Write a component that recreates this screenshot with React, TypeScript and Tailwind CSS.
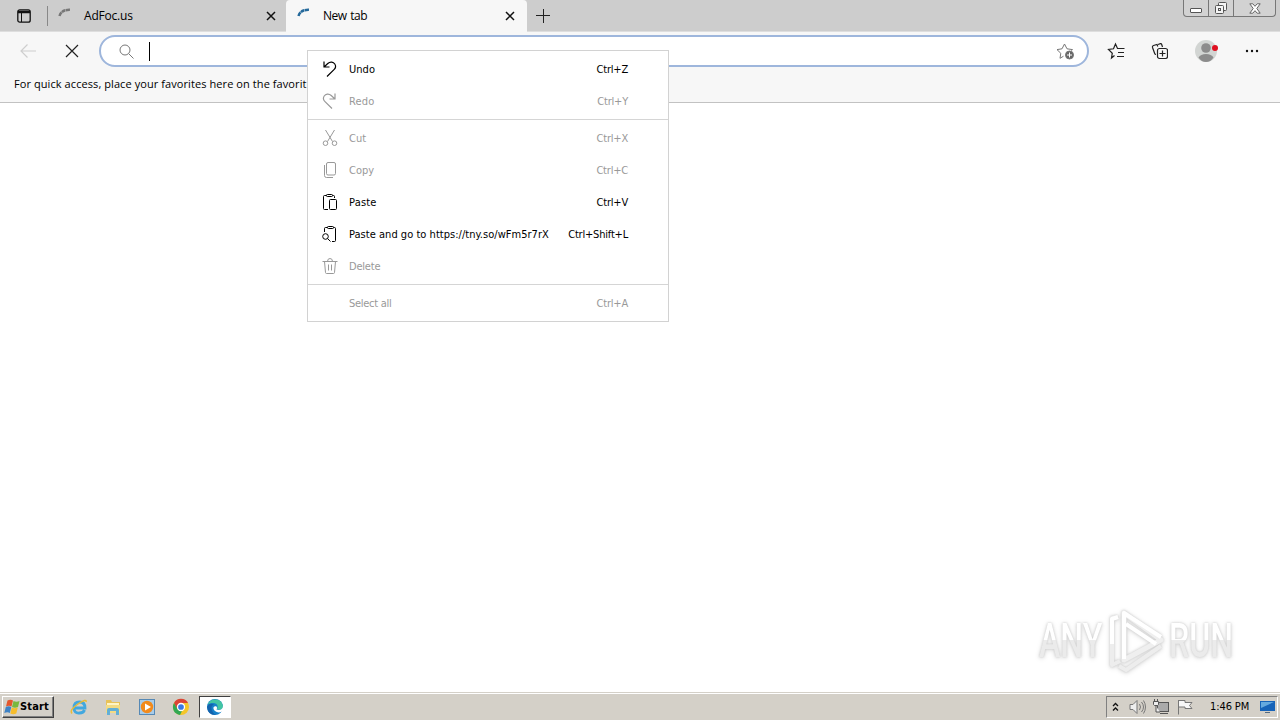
import type { ReactNode } from 'react';

type MenuEntry = { label: string; keys?: string; icon?: ReactNode; disabled?: boolean; tracking?: string };

function Icon({ children, className = 'h-4 w-4' }: { children: ReactNode; className?: string }) {
  return (
    <svg viewBox="0 0 16 16" className={className} fill="none" stroke="currentColor" strokeWidth="1">
      {children}
    </svg>
  );
}

const history: MenuEntry[] = [
  { label: 'Undo', keys: 'Ctrl+Z', icon: <Icon><path d="M2 .5v5.500h5.500M2.300 5.700l3.500-3.200c2.500-2.300 5.600-1.500 7 .5 1.300 2 .9 4-.8 5.700L5 15.500" strokeWidth="1.200" /></Icon> },
  { label: 'Redo', keys: 'Ctrl+Y', disabled: true, tracking: 'tracking-[0.2px]', icon: <Icon><path d="M13 .5v5.500H7.500M12.700 5.700L9.200 2.500C6.700.2 3.600 1 2.200 3c-1.300 2-.9 4 .8 5.700L10 15.500" strokeWidth="1.200" /></Icon> },
];

const editing: MenuEntry[] = [
  { label: 'Cut', keys: 'Ctrl+X', disabled: true, icon: <Icon><path d="M3.500 0l7 11.500M12.500 0l-7 11.500" /><circle cx="3.500" cy="13.200" r="2.300" /><circle cx="12.500" cy="13.200" r="2.300" /></Icon> },
  { label: 'Copy', keys: 'Ctrl+C', disabled: true, icon: <Icon><rect x="4.500" y=".5" width="9" height="12.500" rx="1.500" /><path d="M2.500 3v10.500q0 2 2 2H11" /></Icon> },
  { label: 'Paste', keys: 'Ctrl+V', tracking: 'tracking-[0.2px]', icon: <Icon><path d="M6 15.500H2.500q-1 0-1-1v-12q0-1 1-1h2m6 0h1q1 0 1 1V4" /><rect x="4.500" y=".5" width="6" height="2" rx=".8" /><rect x="7.500" y="5.500" width="7" height="10" rx="1" /></Icon> },
  { label: 'Paste and go to https://tny.so/wFm5r7rX', keys: 'Ctrl+Shift+L', icon: <Icon><path d="M2.500 6V2.500q0-1 1-1h2m6 0h1q1 0 1 1v12q0 1-1 1H10" /><rect x="5.500" y=".5" width="6" height="2" rx=".8" /><circle cx="3.500" cy="10.500" r="2.800" /><path d="M5.500 12.500L8.500 15.500" /></Icon> },
  { label: 'Delete', disabled: true, tracking: 'tracking-[-0.2px]', icon: <Icon><path d="M.5 3.500h15M5.500 3.500Q5.500.5 8 .5t2.500 3M2.500 3.500l1 11q.1 1 1 1h7q.9 0 1-1l1-11M6.500 6.500v6M9.500 6.500v6" /></Icon> },
];

function MenuRow({ label, keys, icon, disabled, tracking = 'tracking-[0.03px]' }: MenuEntry) {
  return (
    <div className={`flex h-8 items-center pl-[14px] pr-[40px] ${disabled ? 'text-[#999]' : 'text-black'}`}>
      <span className="mr-[11px] h-4 w-4">{icon}</span>
      <span className={`pt-[2px] ${tracking}`}>{label}</span>
      <span className="ml-auto pt-[2px] tracking-[-0.2px]">{keys}</span>
    </div>
  );
}

function Separator() {
  return <div className="my-[2px] h-px bg-[#d5d5d5]" />;
}

function ContextMenu() {
  return (
    <div className="absolute left-[307px] top-[50px] h-[272px] w-[362px] whitespace-nowrap border border-[#d2d2d2] bg-white py-[2px] text-[11px] [font-family:'DejaVu_Sans_Condensed','DejaVu_Sans',sans-serif] font-stretch-condensed">
      {history.map((item) => <MenuRow key={item.label} {...item} />)}
      <Separator />
      {editing.map((item) => <MenuRow key={item.label} {...item} />)}
      <Separator />
      <MenuRow label="Select all" keys="Ctrl+A" tracking="tracking-[-0.28px]" disabled />
    </div>
  );
}

function Spinner({ color }: { color: string }) {
  return (
    <svg viewBox="0 0 16 16" className="h-4 w-4" fill="none">
      <path d="M2.500 8Q4.500 1.500 13 1.800" stroke={color} strokeWidth="2.500" strokeDasharray="4 .5" />
    </svg>
  );
}

function Close() {
  return (
    <svg viewBox="0 0 10 10" className="h-[10px] w-[10px]" stroke="#111" strokeWidth="1.500">
      <path d="M1 1l8 8M9 1L1 9" />
    </svg>
  );
}

function WindowControls() {
  return (
    <div className="ml-auto mr-[4px] flex h-[17px] w-[93px] self-start rounded-b-[4px] border border-t-0 border-[#777] bg-[#d2d2d2]">
      <span className="flex w-[25px] items-center justify-center border-r border-[#777] pt-[5px]">
        <span className="h-[5px] w-[12px] rounded-[1px] border border-[#555] bg-white" />
      </span>
      <span className="flex w-[25px] items-center justify-center border-r border-[#777]">
        <svg viewBox="0 0 14 14" className="h-[14px] w-[14px]" fill="#f4f4f4" stroke="#555">
          <rect x="4.500" y="1.500" width="8" height="8" rx="1" />
          <rect x="1.500" y="4.500" width="8" height="8" rx="1" />
          <rect x="4.500" y="7.500" width="2" height="2" />
        </svg>
      </span>
      <span className="flex grow items-center justify-center">
        <svg viewBox="0 0 12 11" className="h-[11px] w-[12px]" fill="#fff" stroke="#666">
          <path d="M.8.8h3L6 3.300 8.200.8h3L7.800 5.500l3.400 4.700h-3L6 7.700l-2.200 2.500h-3l3.400-4.700z" />
        </svg>
      </span>
    </div>
  );
}

function TabStrip() {
  return (
    <div className="flex h-8 items-center border-b border-[#dedede] bg-[#cdcdcd] text-[12px] text-black">
      <svg viewBox="0 0 14 14" className="ml-[17px] h-[14px] w-[14px]" fill="none" stroke="#111">
        <rect x=".8" y=".8" width="12.400" height="12.400" rx="2" strokeWidth="1.300" />
        <path d="M1 3h12" strokeWidth="2.500" />
        <path d="M4.500 4v9" />
      </svg>
      <div className="ml-[16px] h-5 w-px bg-[#888]" />
      <div className="flex h-full w-[238px] items-center pl-[9px] pr-[10px]">
        <Spinner color="#777" />
        <span className="ml-[11px] tracking-[-0.2px]">AdFoc.us</span>
        <span className="ml-auto"><Close /></span>
      </div>
      <div className="z-10 mt-px flex h-8 w-[241px] shrink-0 items-center rounded-t-[4px] bg-[#f7f7f7] pl-[10px] pr-[12px]">
        <Spinner color="#24699b" />
        <span className="ml-[11px] tracking-[-0.5px] [word-spacing:1px]">New tab</span>
        <span className="ml-auto"><Close /></span>
      </div>
      <svg viewBox="0 0 14 14" className="ml-[9px] h-[14px] w-[14px]" stroke="#222">
        <path d="M7.500 0v14M0 6.500h14" />
      </svg>
      <WindowControls />
    </div>
  );
}

function Toolbar() {
  return (
    <div className="flex h-[38px] items-center">
      <svg viewBox="0 0 16 14" className="ml-[20px] h-[14px] w-[16px]" fill="none" stroke="#cecece">
        <path d="M16 7H1M7.500.5L1 7l6.500 6.500" strokeWidth="1.200" />
      </svg>
      <svg viewBox="0 0 14 14" className="ml-[29px] h-[14px] w-[14px]" stroke="#222">
        <path d="M1 1l12 12M13 1L1 13" strokeWidth="1.200" />
      </svg>
      <div className="ml-[20px] flex h-8 w-[990px] items-center rounded-full border-2 border-[#9eb6dc] bg-white pl-[18px] pr-[13px]">
        <svg viewBox="0 0 15 15" className="h-[15px] w-[15px]" fill="none" stroke="#777">
          <circle cx="6" cy="6" r="5" />
          <path d="M9.700 9.700l4.800 4.800" />
        </svg>
        <span className="ml-[15px] h-[19px] w-px bg-black" />
        <svg viewBox="0 0 18 18" className="ml-auto h-[18px] w-[18px]" fill="none" stroke="#777">
          <path d="M7.500 14.200L4 16.300l.8-5-3.800-3.700 5-.8L8.500 2l2.500 4.800 5.500.8-1.200 1" />
          <circle cx="13.500" cy="13" r="4" fill="#666" />
          <path d="M13.500 10.500v5M11 13h5" stroke="#fff" />
        </svg>
      </div>
      <svg viewBox="0 0 18 18" className="ml-[18px] h-[18px] w-[18px]" fill="none" stroke="#222" strokeWidth="1.200">
        <path d="M7.500 13.500L4.500 16l.8-4.800L1.500 7.500l5-.7L8.500 2l2 4.500h7M11 10.500h6M10 14.500h7" />
      </svg>
      <svg viewBox="0 0 18 18" className="ml-[25px] h-[18px] w-[18px]" fill="none" stroke="#222" strokeWidth="1.200">
        <path d="M12.500 5l-.8-2.500q-.3-1-1.300-.8L8 2.500M6 12.500Q5 12.500 4.700 11.500L2.500 5.500Q2 4 3.500 3.500L7 2.500l.8 2" />
        <rect x="7.500" y="6.500" width="10" height="10" rx="2" />
        <path d="M12.500 8.500v6M9.500 11.500h6" />
      </svg>
      <svg viewBox="0 0 24 24" className="ml-[27px] h-6 w-6">
        <circle cx="11" cy="12" r="11" fill="#d2d5d3" />
        <circle cx="11" cy="9" r="4.800" fill="#8c8c8c" />
        <path d="M3.500 18.500q2-3.500 7.500-3.500t7.500 3.500q-3 4.500-7.500 4.500t-7.500-4.500" fill="#8c8c8c" />
        <circle cx="20" cy="9" r="3" fill="#df1020" />
      </svg>
      <svg viewBox="0 0 14 4" className="ml-[26px] h-1 w-[14px]" fill="#111">
        <circle cx="2" cy="2" r="1.200" /><circle cx="7" cy="2" r="1.200" /><circle cx="12" cy="2" r="1.200" />
      </svg>
    </div>
  );
}

function Watermark() {
  return (
    <div className="absolute bottom-[47px] right-[45px] flex h-[64px] w-[196px] items-center text-[48px] leading-[64px] font-medium [font-family:'Roboto','Liberation_Sans',sans-serif] [filter:drop-shadow(0_0_1px_#ccc)_drop-shadow(0_1px_2px_#ddd)]">
      <span className="w-[69px] shrink-0"><span className="inline-block origin-left scale-x-[.67] bg-linear-to-b from-white from-48% to-[#ebebeb] to-48% bg-clip-text text-transparent">ANY</span></span>
      <svg viewBox="0 0 58 64" className="h-[64px] w-[58px] shrink-0" fill="none" strokeLinejoin="round">
        <path d="M10 8L4 9v47l8-4M11 57l7 4 35-24" stroke="#ededed" strokeWidth="4" />
        <path d="M16 4v47l37-20z" stroke="#efefef" strokeWidth="5" />
        <path d="M16 50V4l37 24M18 15l30 20M4 35V10l6-2" stroke="#fff" strokeWidth="4" />
      </svg>
      <span className="ml-[3px] w-[64px] shrink-0"><span className="inline-block origin-left scale-x-[.67] bg-linear-to-b from-white from-48% to-[#ebebeb] to-48% bg-clip-text text-transparent">RUN</span></span>
    </div>
  );
}

function WindowsLogo() {
  return (
    <svg viewBox="0 0 16 16" className="h-4 w-4 shrink-0">
      <path d="M3.500 1.500q3-1.500 5.500 0L7.500 7.500Q5 6 2 7.500z" fill="#e4572c" />
      <path d="M9.500 2q3 1.500 6 0L14 8q-3 1.500-6 0z" fill="#79b83e" />
      <path d="M1.800 8q3-1.500 5.500 0L5.800 14Q3.500 12.500.3 14z" fill="#3e82c5" />
      <path d="M7.800 8.500q3 1.500 6 0l-1.500 6q-3 1.500-6 0z" fill="#f6bd2c" />
    </svg>
  );
}

function Taskbar() {
  return (
    <div className="flex h-7 shrink-0 items-center border-t border-[#d4d0c8] bg-[#d4d0c8] text-black shadow-[inset_0_1px_0_#fff]">
      <div className="ml-[2px] flex h-[22px] w-[52px] items-center border border-b-[#404040] border-l-white border-r-[#404040] border-t-white pl-px font-bold shadow-[inset_-1px_-1px_0_#808080]">
        <WindowsLogo />
        <span className="pt-px text-[11px] tracking-[0.15px] [font-family:'DejaVu_Sans_Condensed','DejaVu_Sans',sans-serif] font-stretch-condensed">Start</span>
      </div>
      <svg viewBox="0 0 18 18" className="ml-[16px] h-[18px] w-[18px]" fill="none">
        <path d="M4 10h11q0-6-5.500-6T4 9.800 9.500 15q4 0 5-3" stroke="#42a8df" strokeWidth="2.800" />
        <path d="M2 15.500Q-1 12 8 6t8-2" stroke="#e9bb36" strokeWidth="1.500" />
      </svg>
      <svg viewBox="0 0 18 18" className="ml-[16px] h-[18px] w-[18px]">
        <path d="M2 2h5l1 2h8v11H2z" fill="#e8c258" />
        <path d="M3 5h12v3H3z" fill="#fff4c5" /><path d="M2 7h14v8H2z" fill="#f3db84" />
        <path d="M3 17v-5q0-2 2-2h8q2 0 2 2v5h-3v-4H6v4z" fill="#63afd6" />
      </svg>
      <svg viewBox="0 0 18 18" className="ml-[16px] h-[18px] w-[18px]">
        <rect x="1.500" y="1.500" width="15" height="15" fill="#a8cce9" stroke="#5689b5" />
        <circle cx="9" cy="9" r="6.200" fill="#f28a1b" /><path d="M7 5.500l6 3.500-6 3.500z" fill="#fff" />
      </svg>
      <svg viewBox="0 0 18 18" className="ml-[16px] h-[18px] w-[18px]">
        <circle cx="9" cy="9" r="8" fill="#f4c629" />
        <path d="M2 5a8 8 0 0 1 14 0H9L5 11z" fill="#db4437" />
        <path d="M2 5l4 7 4 1-2 4A8 8 0 0 1 2 5" fill="#32a853" />
        <circle cx="9" cy="9" r="3.500" fill="#3979e5" stroke="#fff" strokeWidth="1.300" />
      </svg>
      <div className="ml-[9px] flex h-[22px] w-[32px] items-center justify-center border border-b-white border-l-[#404040] border-r-white border-t-[#404040] bg-white">
        <svg viewBox="0 0 18 18" className="h-[18px] w-[18px]">
          <circle cx="9" cy="9" r="8" fill="#1680c9" />
          <path d="M1.500 7a8 8 0 0 1 15.500 1c0 4-4 4.500-6 3 2-4-1-6-4-6-2 0-4 .5-5.500 2" fill="#43c5a3" />
          <path d="M17 8c0 4-4 4.500-6.500 3.500.5-1 1-1.500 0-3C7 7.500 6.500 11 9 13q3 2.500 7 .5L18 15V8z" fill="#fff" />
          <path d="M1 9q2-5 7-2.500Q4 8 6 12.500T11 17Q2 18 1 9" fill="#1463ad" />
        </svg>
      </div>
      <div className="ml-auto mr-[2px] flex h-[22px] w-[172px] items-center border border-b-white border-l-[#808080] border-r-white border-t-[#808080] pl-[5px] pr-[2px] text-[11px]">
        <svg viewBox="0 0 7 10" className="h-[10px] w-[7px] shrink-0" fill="none" stroke="#111" strokeWidth="1.300">
          <path d="M1 4l2.500-2.500L6 4M1 8.500L3.500 6 6 8.500" />
        </svg>
        <svg viewBox="0 0 17 16" className="ml-[10px] h-4 w-[17px] shrink-0" fill="#eee" stroke="#777">
          <path d="M1 5.500h3l4-4v13l-4-4H1z" /><path d="M10.500 5q2 3 0 6M12.500 3q4 5 0 10M14.500 1.500q4 6.500 0 13" fill="none" />
        </svg>
        <svg viewBox="0 0 17 16" className="ml-[7px] h-4 w-[17px] shrink-0" fill="#eee" stroke="#555">
          <rect x="4.500" y="3.500" width="11" height="9" fill="#aaa" /><path d="M7 14.500h8M.5 2.500h5v3l-1 1h-3l-1-1zM1.500 0v2.500M4.500 0v2.500M3 7v6h4" />
        </svg>
        <svg viewBox="0 0 17 16" className="ml-[7px] h-4 w-[17px] shrink-0" fill="#f7f7f7" stroke="#777">
          <path d="M1.500 1v14.500M2 1.500h6v2h7l-2.500 3 2.500 3H8V8H2" />
        </svg>
        <span className="ml-[16px] whitespace-nowrap pt-px tracking-[-0.1px] [font-family:'DejaVu_Sans_Condensed','DejaVu_Sans',sans-serif] font-stretch-condensed">1:46 PM</span>
        <svg viewBox="0 0 15 14" className="ml-auto h-[14px] w-[15px] shrink-0">
          <path d="M0 1h15v10H0z" fill="#1763b8" /><path d="M1 2h13L1 8z" fill="#65a9df" /><path d="M5 12h5v1H5z" fill="#526a83" />
        </svg>
      </div>
    </div>
  );
}

export default function App() {
  return (
    <div className="relative flex h-[720px] w-[1280px] flex-col overflow-hidden bg-white [font-family:'Open_Sans','Noto_Sans',sans-serif]">
      <TabStrip />
      <div className="h-[71px] shrink-0 border-b border-[#c2c2c2] bg-[#f7f7f7]">
        <Toolbar />
        <div className="flex h-7 items-center whitespace-nowrap pl-[14px] text-[11px] tracking-[0.08px] text-black">
          For quick access, place your favorites here on the favorit
        </div>
      </div>
      <main className="grow" />
      <Taskbar />
      <Watermark />
      <ContextMenu />
    </div>
  );
}
